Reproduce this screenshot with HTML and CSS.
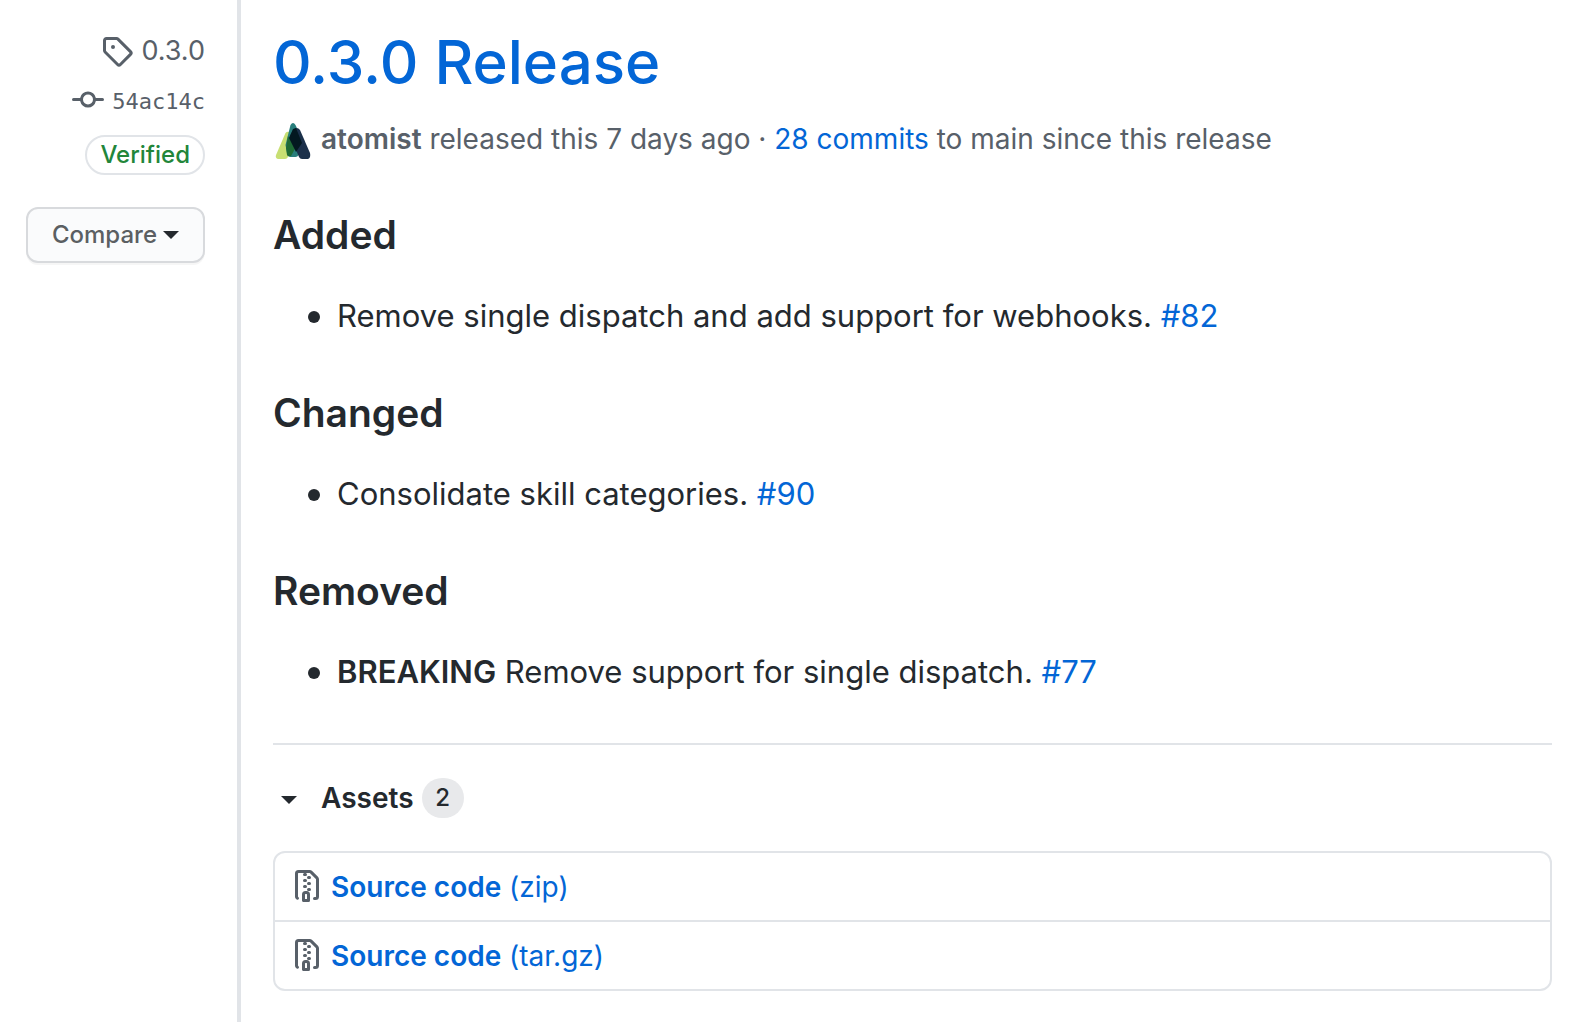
FILE: index.html
```html
<!DOCTYPE html>
<html lang="en">
<head>
<meta charset="utf-8">
<meta name="viewport" content="width=device-width, initial-scale=1">
<title>0.3.0 Release</title>
<link rel="stylesheet" href="styles.css">
</head>
<body>
<div class="release">
  <aside class="sidebar">
    <a class="tag" href="#tag">
      <svg class="icon" viewBox="0 0 16 16" aria-hidden="true"><path fill-rule="evenodd" d="M2.5 7.775V2.75a.25.25 0 01.25-.25h5.025a.25.25 0 01.177.073l6.25 6.25a.25.25 0 010 .354l-5.025 5.025a.25.25 0 01-.354 0l-6.25-6.25a.25.25 0 01-.073-.177zm-1.5 0V2.75C1 1.784 1.784 1 2.75 1h5.025c.464 0 .91.184 1.238.513l6.25 6.25a1.75 1.75 0 010 2.474l-5.026 5.026a1.75 1.75 0 01-2.474 0l-6.25-6.25A1.75 1.75 0 011 7.775zM6 5a1 1 0 100 2 1 1 0 000-2z"/></svg>
      <span>0.3.0</span>
    </a>
    <a class="commit" href="#commit">
      <svg class="icon" viewBox="0 0 16 16" aria-hidden="true"><path fill-rule="evenodd" d="M10.5 7.75a2.5 2.5 0 11-5 0 2.5 2.5 0 015 0zm1.43.75a4.002 4.002 0 01-7.86 0H.75a.75.75 0 110-1.5h3.32a4.001 4.001 0 017.86 0h3.32a.75.75 0 110 1.5h-3.32z"/></svg>
      <code>54ac14c</code>
    </a>
    <button class="verified" type="button">Verified</button>
    <button class="compare" type="button">Compare <span class="caret"></span></button>
  </aside>
  <main class="main">
    <h1 class="title"><a href="#release">0.3.0 Release</a></h1>
    <p class="meta">
      <svg class="avatar" viewBox="0 0 40 40" aria-hidden="true">
        <path fill="#c8df73" d="M12.500 14q1.500-2 4-1l4.500 12-6 13q-1 2-3 2H5q-3-1-2-4z"/>
        <path fill="#297e7c" d="M17.500 6q2.500-4 5 0l7 15-4 15q-1 2-3 2h-5q-2 0-3-2l-2-10z"/>
        <path fill="#1b304a" d="M20 11q4-4 7 0l10 23q1 5-2 6h-6q-2 0-3-2l-9-21z"/>
        <path fill="#1f6b35" d="M15 17l8 11-5 9q-3 1-4-1l-1-7z"/>
        <path fill="#031820" d="M20 10l3-1 6 15-6 9-7-14z"/>
      </svg>
      <span><a class="author" href="#atomist">atomist</a> released this 7 days ago · <a href="#commits">28 commits</a> to main since this release</span>
    </p>
    <section class="notes">
      <h2>Added</h2>
      <ul><li>Remove single dispatch and add support for webhooks. <a href="#82">#82</a></li></ul>
      <h2>Changed</h2>
      <ul><li>Consolidate skill categories. <a href="#90">#90</a></li></ul>
      <h2>Removed</h2>
      <ul><li><strong>BREAKING</strong> Remove support for single dispatch. <a href="#77">#77</a></li></ul>
    </section>
    <details class="assets" open>
      <summary><span class="caret"></span><span class="assets-label">Assets</span><span class="counter">2</span></summary>
      <ul class="files">
        <li><svg class="icon" viewBox="0 0 16 16" aria-hidden="true"><path fill-rule="evenodd" d="M3.5 1.75a.25.25 0 01.25-.25h3a.75.75 0 000 1.5h.5a.75.75 0 000-1.5h2.086a.25.25 0 01.177.073l2.914 2.914a.25.25 0 01.073.177v8.586a.25.25 0 01-.25.25h-.5a.75.75 0 000 1.5h.5A1.75 1.75 0 0014 13.25V4.664c0-.464-.184-.909-.513-1.237L10.573.513A1.75 1.75 0 009.336 0H3.75A1.75 1.75 0 002 1.75v11.5c0 .649.353 1.214.874 1.515a.75.75 0 10.752-1.298.25.25 0 01-.126-.217V1.75zM8.75 3a.75.75 0 000 1.5h.5a.75.75 0 000-1.5h-.5zM6 5.25a.75.75 0 01.75-.75h.5a.75.75 0 010 1.5h-.5A.75.75 0 016 5.25zm2 1.5A.75.75 0 018.75 6h.5a.75.75 0 010 1.5h-.5A.75.75 0 018 6.75zm-1.25.75a.75.75 0 000 1.5h.5a.75.75 0 000-1.5h-.5zM8 9.75A.75.75 0 018.75 9h.5a.75.75 0 010 1.5h-.5A.75.75 0 018 9.75zm-.75.75a1.75 1.75 0 00-1.75 1.75v3c0 .414.336.75.75.75h2.5a.75.75 0 00.75-.75v-3a1.75 1.75 0 00-1.75-1.75h-.5zM7 12.25a.25.25 0 01.25-.25h.5a.25.25 0 01.25.25v2.25H7v-2.25z"/></svg><a href="#zip"><strong>Source code</strong> (zip)</a></li>
        <li><svg class="icon" viewBox="0 0 16 16" aria-hidden="true"><path fill-rule="evenodd" d="M3.5 1.75a.25.25 0 01.25-.25h3a.75.75 0 000 1.5h.5a.75.75 0 000-1.5h2.086a.25.25 0 01.177.073l2.914 2.914a.25.25 0 01.073.177v8.586a.25.25 0 01-.25.25h-.5a.75.75 0 000 1.5h.5A1.75 1.75 0 0014 13.25V4.664c0-.464-.184-.909-.513-1.237L10.573.513A1.75 1.75 0 009.336 0H3.75A1.75 1.75 0 002 1.75v11.5c0 .649.353 1.214.874 1.515a.75.75 0 10.752-1.298.25.25 0 01-.126-.217V1.75zM8.75 3a.75.75 0 000 1.5h.5a.75.75 0 000-1.5h-.5zM6 5.25a.75.75 0 01.75-.75h.5a.75.75 0 010 1.5h-.5A.75.75 0 016 5.25zm2 1.5A.75.75 0 018.75 6h.5a.75.75 0 010 1.5h-.5A.75.75 0 018 6.75zm-1.25.75a.75.75 0 000 1.5h.5a.75.75 0 000-1.5h-.5zM8 9.75A.75.75 0 018.75 9h.5a.75.75 0 010 1.5h-.5A.75.75 0 018 9.75zm-.75.75a1.75 1.75 0 00-1.75 1.75v3c0 .414.336.75.75.75h2.5a.75.75 0 00.75-.75v-3a1.75 1.75 0 00-1.75-1.75h-.5zM7 12.25a.25.25 0 01.25-.25h.5a.25.25 0 01.25.25v2.25H7v-2.25z"/></svg><a href="#targz"><strong>Source code</strong> (tar.gz)</a></li>
      </ul>
    </details>
  </main>
</div>
</body>
</html>
```
FILE: styles.css
```css
* { box-sizing: border-box; }
body {
  margin: 0;
  background: #fff;
  color: #24292e;
  font-family: Inter, "Liberation Sans", sans-serif;
  font-size: 28px;
  line-height: 42px;
}
a { color: #0366d6; text-decoration: none; }
strong { font-weight: 600; }
h1, h2, p, ul { margin: 0; }
.release { display: flex; min-height: 100vh; }
.icon { width: 32px; height: 32px; flex: none; fill: #586069; }
.caret {
  display: inline-block;
  border: 8px solid transparent;
  border-top-color: #24292e;
  border-bottom-width: 0;
}

.sidebar {
  flex: none;
  width: 241px;
  padding: 30px 32px 0 16px;
  border-right: 4px solid #e1e4e8;
  display: flex;
  flex-direction: column;
  align-items: flex-end;
}
.sidebar a { display: flex; align-items: center; gap: 8px; color: #586069; }
.tag { font-size: 27px; }
.commit { margin-top: 7px; }
.commit code { padding-top: 4px; font: 22px/38px "DejaVu Sans Mono", monospace; }
.verified {
  height: 40px;
  margin-top: 14px;
  padding: 0 13px;
  border: 2px solid #e1e4e8;
  border-radius: 20px;
  background: #fff;
  color: #22863a;
  font: 500 24px/36px Inter, sans-serif;
}
.compare {
  height: 56px;
  margin-top: 32px;
  padding: 0 24px;
  border: 2px solid #d8dadd;
  border-radius: 12px;
  background: #fafbfc;
  box-shadow: 0 2px 0 rgba(27, 31, 35, .04);
  color: #5b5f62;
  font: 500 24px/40px Inter, sans-serif;
  display: flex;
  align-items: center;
  gap: 6px;
}

.main { flex: 1; min-width: 0; padding: 22px 30px 31px 32px; }
.title { font-size: 60px; font-weight: 500; line-height: 80px; }
.meta { display: flex; align-items: center; gap: 8px; margin-top: 16px; color: #586069; }
.avatar { width: 40px; height: 40px; flex: none; }
.author { color: #586069; font-weight: 600; }

.notes { margin-top: 50px; padding-bottom: 47px; border-bottom: 2px solid #e1e4e8; }
.notes h2 { margin-bottom: 32px; font-size: 39px; font-weight: 600; line-height: 50px; }
.notes ul { padding-left: 64px; font-size: 31px; line-height: 48px; list-style: none; }
.notes li::before {
  content: "";
  display: inline-block;
  width: 12px;
  height: 12px;
  margin: 0 17px 0 -29px;
  border-radius: 50%;
  background: #24292e;
  vertical-align: 4px;
}
.notes ul + h2 { margin-top: 48px; }

.assets summary { display: flex; align-items: center; margin-top: 32px; list-style: none; }
.assets summary .caret { margin: 4px 24px 0 8px; }
.assets-label { font-weight: 600; }
.counter {
  min-width: 42px;
  margin-left: 8px;
  padding: 0 12px;
  border-radius: 20px;
  background: #e8e9eb;
  font-size: 24px;
  font-weight: 500;
  line-height: 40px;
  text-align: center;
}
.files { margin-top: 32px; padding: 0; border: 2px solid #e1e4e8; border-radius: 12px; list-style: none; }
.files li { display: flex; align-items: center; gap: 8px; min-height: 67px; padding: 0 16px; }
.files li + li { min-height: 69px; border-top: 2px solid #e1e4e8; }
.files .icon { margin-bottom: 2px; }
```
